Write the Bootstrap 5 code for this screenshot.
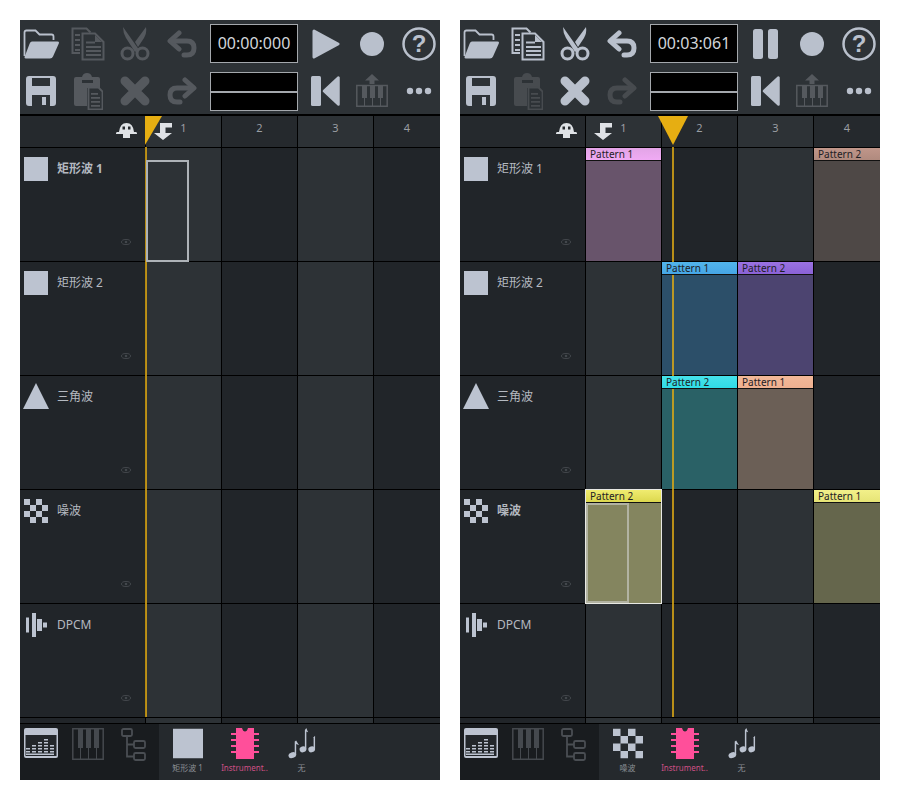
<!DOCTYPE html>
<html lang="zh">
<head>
<meta charset="utf-8">
<title>FamiStudio</title>
<link rel="stylesheet" href="https://cdn.jsdelivr.net/npm/bootstrap@5.3.0/dist/css/bootstrap.min.css">
<style>
body{background:#fff;font-family:"Noto Sans","Noto Sans CJK SC",sans-serif;margin:0}
.stage{padding:20px;gap:20px;width:900px}
.fs-panel{width:420px;height:760px;overflow:hidden;position:relative;background:#212529}
.tools{height:94px;background:#2d3236;display:grid;grid-template-columns:41px 54px 40px 54px 90px 53px 40px 48px;grid-template-rows:47px 47px;justify-items:center;align-items:center}
.tools svg{display:block}
.tools .last{padding-left:6px;justify-self:stretch;display:flex;justify-content:center}
.on{color:#b9c0cc}.off{color:#55595e}.off2{color:#474b4f}
.timer{width:88px;height:39px;background:#000;border:1px solid #a4a8ad;color:#d2d5da;font-size:16px;line-height:36px;text-align:center}
.timer2{width:88px;height:39px;background:linear-gradient(#000 0 18px,#a4a8ad 18px 20px,#000 20px);border:1px solid #a4a8ad;margin-top:2px}
.trk,.hdr{display:grid;grid-template-columns:126px 76px 76px 76px 66px}
.hdr{border-top:2px solid #000;height:34px;border-bottom:1px solid #000}
.hdr>div{border-right:1px solid #000;color:#9a9ea3;font-size:11px;text-align:center;line-height:23px;position:relative}
.hdr svg{position:absolute}
.trk{height:114px;border-bottom:1px solid #000}
.trk.stub{height:6px}
.trk>div{border-right:1px solid #000;min-width:0}
.trk>div:last-child,.hdr>div:last-child{border-right:0}
.lt{background:#2d3236}.dk{background:#212529}
.hdr .dk{background:#25292d}.hdr .lt{background:#2d3236}
.lab0{background:#212529;padding:9px 0 0 0}
.lab0 svg{display:block;flex:none}
.tri-ic{margin:-2px -1px 0 3px}
.lname{color:#b4b9c0;font-size:12px;line-height:22px;margin:1px 0 0 9px;white-space:nowrap}
.lname.sel{font-weight:700}
.eye{margin:auto 0 16px 101px;color:#43474c}
.pat{display:flex;flex-direction:column;height:100%}
.phead{height:13px;border-bottom:1px solid #111;font-size:10px;line-height:12px;color:#1d2024;padding-left:4px;position:relative;z-index:2;white-space:nowrap}
.pbody{flex:1;position:relative}
.p-pink .phead{background:linear-gradient(#e2a4e6,#f0aaf4)}.p-pink .pbody{background:#68546b}
.p-brown .phead{background:linear-gradient(#c0968a,#b08a7e)}.p-brown .pbody{background:#4e4846}
.p-blue .phead{background:linear-gradient(#52b4ea,#46a6e6)}.p-blue .pbody{background:#2c4f69}
.p-purple .phead{background:linear-gradient(#9a72e2,#8a62d6)}.p-purple .pbody{background:#4c4470}
.p-cyan .phead{background:linear-gradient(#46e2ea,#30dce6)}.p-cyan .pbody{background:#2a6166}
.p-peach .phead{background:linear-gradient(#f2b898,#eeb090)}.p-peach .pbody{background:#6b5f56}
.p-yel .phead{background:linear-gradient(#f0ec70,#dcd84e)}.p-yel .pbody{background:#84855f}
.p-yel2 .phead{background:linear-gradient(#f2f08a,#e6e476)}.p-yel2 .pbody{background:#65664c}
.pat.picked{outline:2px solid #e8e9e4;outline-offset:-1px;position:relative;z-index:3}
.inner{border:2px solid #b2b3a2;width:43px;height:100%}
.ghost{position:absolute;left:0;top:12px;width:43px;height:102px;border:2px solid #aeb3b8;z-index:2}
.cell-rel{position:relative}
.phline{position:absolute;top:127px;width:2px;height:570px;background:rgba(224,170,20,.8);z-index:1}
.phtri{position:absolute;top:96px;z-index:4}
.foot{height:56px;display:flex;background:#25292d}
.fleft{width:139px;background:#191c1f;display:flex;flex:none;align-items:flex-start;padding-top:4px}
.fleft>div{display:flex;justify-content:center}
.fi{width:57px;text-align:center;color:#8a8e94;font-size:8px;line-height:12px;padding-top:4px;white-space:nowrap}
.fi svg{display:block;margin:0 auto 3px;height:31px}
.fi.pink{color:#cf4f86}
</style>
</head>
<body>
<svg width="0" height="0" class="d-block position-absolute">
<defs>
<symbol id="i-open" viewBox="0 0 36 30"><path d="M1.500 27V3.500q0-2 2-2h9l4 4h12q2 0 2 2V11" fill="none" stroke="currentColor" stroke-width="1.800"/><path d="M9 12.500h25.500q2 0 1.300 2L30 27.500q-.8 2-3 2H3q-2 0-1.300-2l5-13q.8-2 2.300-2z" fill="currentColor"/></symbol>
<symbol id="i-copy" viewBox="0 0 34 34"><g fill="none" stroke="currentColor" stroke-width="2"><path d="M9 26H1.500V1.500h14l4 4"/><path d="M11.500 6.500H24l8.500 8.500V32.500h-21z"/></g><path d="M15 14.500h9v2h-9zM15 19h15v2H15zM15 23h15v2H15zM15 27h15v2H15zM4 7h5v2H4zM4 12h5v2H4zM4 17h5v2H4zM4 22h5v2H4zM24 8l7 7h-7z" fill="currentColor"/></symbol>
<symbol id="i-cut" viewBox="0 0 30 34"><path d="M3 0l15.500 22-3.500 3L6 11Q3 6 3 0zM26 0q1 6-2 11l-6 9-3-5z" fill="currentColor"/><g fill="none" stroke="currentColor" stroke-width="3"><circle cx="7.500" cy="26.500" r="5.500"/><circle cx="22.500" cy="26.500" r="5.500"/></g></symbol>
<symbol id="i-undo" viewBox="0 0 30 28"><g fill="none" stroke="currentColor" stroke-width="5" stroke-linejoin="round" stroke-linecap="round"><path d="M12 3L3 11l9 8"/><path d="M5 11h15q7 0 7 7t-7 7h-3"/></g></symbol>
<symbol id="i-redo" viewBox="0 0 30 28"><g fill="none" stroke="currentColor" stroke-width="5" stroke-linejoin="round" stroke-linecap="round"><path d="M18 3l9 8-9 8"/><path d="M25 11H10q-7 0-7 7t7 7h3"/></g></symbol>
<symbol id="i-save" viewBox="0 0 30 30"><path fill-rule="evenodd" fill="currentColor" d="M3 0h24q3 0 3 3v24q0 3-3 3H3q-3 0-3-3V3q0-3 3-3zM6 2v8h18V2zM6 19v11h18V19z"/><path d="M16 21h4v8h-4z" fill="currentColor"/></symbol>
<symbol id="i-paste" viewBox="0 0 30 38"><path fill="currentColor" d="M3 5h6q1-4 5-4t5 4h6q2 0 2 2v9H14v18H3q-2 0-2-2V7q0-2 2-2zM9 8v3h11V8z" fill-rule="evenodd"/><path d="M15.500 15.500h10l4 4v18h-14z" fill="none" stroke="currentColor" stroke-width="1.800"/><path d="M18 21h7v1.800h-7zM18 25h9v1.800h-9zM18 29h9v1.800h-9zM18 33h9v1.800h-9z" fill="currentColor"/></symbol>
<symbol id="i-x" viewBox="0 0 30 30"><path d="M5 5l20 20M25 5L5 25" stroke="currentColor" stroke-width="9" stroke-linecap="round"/></symbol>
<symbol id="i-play" viewBox="0 0 28 30"><path d="M2 2l24 13L2 28z" fill="currentColor" stroke="currentColor" stroke-width="3" stroke-linejoin="round"/></symbol>
<symbol id="i-pause" viewBox="0 0 26 30"><rect x="0" y="0" width="10" height="30" rx="2.500" fill="currentColor"/><rect x="15" y="0" width="10" height="30" rx="2.500" fill="currentColor"/></symbol>
<symbol id="i-skip" viewBox="0 0 30 30"><rect x="0" y="0" width="10" height="30" rx="1.500" fill="currentColor"/><path d="M27.500 1.500v27L13 15z" fill="currentColor" stroke="currentColor" stroke-width="2.500" stroke-linejoin="round"/></symbol>
<symbol id="i-upkeys" viewBox="0 0 32 33"><path d="M16 0l7 6.500h-4.500V10h-5V6.500H9z" fill="currentColor"/><path d="M.8 11.500h30.400v20.700H.8z" fill="none" stroke="currentColor" stroke-width="1.500"/><path d="M6 12h5v12H6zM14 12h5v12h-5zM22 12h5v12h-5zM8 24h1v8H8zM16 24h1v8h-1zM24 24h1v8h-1z" fill="currentColor"/></symbol>
<symbol id="i-eye" viewBox="0 0 10 6"><ellipse cx="5" cy="3" rx="4.500" ry="2.500" fill="none" stroke="currentColor"/><circle cx="5" cy="3" r="1.300" fill="currentColor"/></symbol>
<symbol id="i-sq" viewBox="0 0 24 24"><rect width="24" height="24" fill="#bcc3d0"/></symbol>
<symbol id="i-tri" viewBox="0 0 26 26"><path d="M13 0l13 26H0z" fill="#bcc3d0"/></symbol>
<symbol id="i-noise" viewBox="0 0 24 24"><path d="M0 0h6v6H0zM12 0h6v6h-6zM6 6h6v6H6zM18 6h6v6h-6zM0 12h6v6H0zM12 12h6v6h-6zM6 18h6v6H6zM18 18h6v6h-6z" fill="#bcc3d0"/></symbol>
<symbol id="i-dpcm" viewBox="0 0 24 24"><path d="M2 4.500h3v15H2zM8 0h4v24H8zM13 6h5v12h-5zM19 9.500h4v5h-4z" fill="#bcc3d0"/></symbol>
<symbol id="i-seq" viewBox="0 0 34 30"><rect width="34" height="30" rx="2" fill="#bcc3d0"/><rect x="1.500" y="7" width="31" height="21" fill="#22262a"/><path d="M2 20h4v1.500H2zM2 23h4v1.500H2zM8 17h4v1.500H8zM8 20h4v1.500H8zM8 23h4v1.500H8zM14 14h4v1.500h-4zM14 17h4v1.500h-4zM14 20h4v1.500h-4zM14 23h4v1.500h-4zM20 11h4v1.500h-4zM20 14h4v1.500h-4zM20 17h4v1.500h-4zM20 20h4v1.500h-4zM20 23h4v1.500h-4zM26 17h4v1.500h-4zM26 20h4v1.500h-4zM26 23h4v1.500h-4zM2 25.500h28v1.500H2z" fill="#bcc3d0"/></symbol>
<symbol id="i-keys" viewBox="0 0 32 32"><path d="M.8.800h30.400v30.400H.8z" fill="none" stroke="#45494e" stroke-width="1.500"/><path d="M6 1h5v19H6zM14 1h5v19h-5zM22 1h5v19h-5z" fill="#45494e"/><path d="M8 20h1v11H8zM16 20h1v11h-1zM24 20h1v11h-1z" fill="#45494e"/></symbol>
<symbol id="i-tree" viewBox="0 0 25 33"><g fill="none" stroke="#4a4e53" stroke-width="1.800"><rect x="1" y="1" width="10" height="7" rx="1.500"/><rect x="13" y="13" width="11" height="7" rx="1.500"/><rect x="13" y="25" width="11" height="7" rx="1.500"/><path d="M6 8v20.500h7M6 16.500h7"/></g></symbol>
<symbol id="i-chip" viewBox="0 0 30 31"><path d="M6 0h6q1 3.500 3 3.500T18 0h6v31H6z" fill="#ff4f9a"/><path d="M1 5h28v2H1zM1 11h28v2H1zM1 17h28v2H1zM1 23h28v2H1z" fill="#ff4f9a"/></symbol>
<symbol id="i-notes" viewBox="0 0 29 32"><g fill="#bcc3d0"><ellipse cx="5" cy="28" rx="4" ry="3" transform="rotate(-20 5 28)"/><path d="M7.500 14l1.500-1v15H7.500zM9 13q1.500 3 3 4.500-2-.5-3-1z"/><ellipse cx="16" cy="22" rx="3.500" ry="3" transform="rotate(-20 16 22)"/><path d="M18 2l1.500-2v22H18zM19.500 0q1 3 2 4.500-1-.5-2-1z"/><ellipse cx="25" cy="22" rx="3.500" ry="3" transform="rotate(-20 25 22)"/><path d="M27 9.500l1.500-1.500v14H27z"/></g></symbol>
<symbol id="i-snap" viewBox="0 0 21 15"><path fill-rule="evenodd" d="M10.500 0Q17 0 18 9h2q1 0 1 1.500v.5h-7v4H7v-4H0v-.5Q0 9 1 9h2Q4 0 10.500 0zM6.500 3.500v3h2.500v-3zM12 3.500v3h2.500v-3z" fill="#dfe2e6"/></symbol>
<symbol id="i-arrow" viewBox="0 0 18 17"><path d="M6 0h12v4.500h-6.500V10H18L9 17 0 10h6z" fill="#dfe2e6"/></symbol>
</defs>
</svg>

<div class="stage d-flex">
<!-- left -->
<div class="fs-panel">
 <div class="tools">
  <svg class="on" width="36" height="30"><use href="#i-open"/></svg>
  <svg class="off" width="34" height="34"><use href="#i-copy"/></svg>
  <svg class="off" width="30" height="34"><use href="#i-cut"/></svg>
  <svg class="off" width="30" height="28"><use href="#i-undo"/></svg>
  <div class="timer">00:00:000</div>
  <svg class="on" width="28" height="30"><use href="#i-play"/></svg>
  <svg class="on" width="24" height="24"><circle cx="12" cy="12" r="12" fill="currentColor"/></svg>
  <div class="last"><svg class="on" width="34" height="34" viewBox="0 0 34 34"><circle cx="17" cy="17" r="15.500" fill="none" stroke="currentColor" stroke-width="2.500"/><text x="17" y="25" text-anchor="middle" font-family="Liberation Sans" font-weight="700" font-size="24" fill="currentColor">?</text></svg></div>
  <svg class="on" width="30" height="30"><use href="#i-save"/></svg>
  <svg class="off" width="30" height="38"><use href="#i-paste"/></svg>
  <svg class="off" width="30" height="30"><use href="#i-x"/></svg>
  <svg class="off" width="30" height="28"><use href="#i-redo"/></svg>
  <div class="timer2"></div>
  <svg class="on" width="30" height="30"><use href="#i-skip"/></svg>
  <svg class="off" width="32" height="33"><use href="#i-upkeys"/></svg>
  <div class="last"><svg class="on" width="26" height="8" viewBox="0 0 26 8"><circle cx="4" cy="4" r="3.200" fill="currentColor"/><circle cx="13" cy="4" r="3.200" fill="currentColor"/><circle cx="22" cy="4" r="3.200" fill="currentColor"/></svg></div>
 </div>
 <div class="hdr">
  <div class="dk"><svg width="21" height="15" style="left:96px;top:7px"><use href="#i-snap"/></svg></div>
  <div class="lt"><svg width="18" height="17" style="left:8px;top:7px"><use href="#i-arrow"/></svg>1</div>
  <div class="dk">2</div><div class="lt">3</div><div class="dk">4</div>
 </div>
 <div class="trk">
  <div class="lab0 d-flex flex-column"><div class="d-flex"><svg width="24" height="24" class="ms-1"><use href="#i-sq"/></svg><span class="lname sel">矩形波 1</span></div><svg class="eye" width="10" height="6"><use href="#i-eye"/></svg></div>
  <div class="lt cell-rel"><div class="ghost"></div></div><div class="dk"></div><div class="lt"></div><div class="dk"></div>
 </div>
 <div class="trk">
  <div class="lab0 d-flex flex-column"><div class="d-flex"><svg width="24" height="24" class="ms-1"><use href="#i-sq"/></svg><span class="lname">矩形波 2</span></div><svg class="eye" width="10" height="6"><use href="#i-eye"/></svg></div>
  <div class="lt"></div><div class="dk"></div><div class="lt"></div><div class="dk"></div>
 </div>
 <div class="trk">
  <div class="lab0 d-flex flex-column"><div class="d-flex"><svg width="26" height="26" class="tri-ic"><use href="#i-tri"/></svg><span class="lname">三角波</span></div><svg class="eye" width="10" height="6"><use href="#i-eye"/></svg></div>
  <div class="lt"></div><div class="dk"></div><div class="lt"></div><div class="dk"></div>
 </div>
 <div class="trk">
  <div class="lab0 d-flex flex-column"><div class="d-flex"><svg width="24" height="24" class="ms-1"><use href="#i-noise"/></svg><span class="lname">噪波</span></div><svg class="eye" width="10" height="6"><use href="#i-eye"/></svg></div>
  <div class="lt"></div><div class="dk"></div><div class="lt"></div><div class="dk"></div>
 </div>
 <div class="trk">
  <div class="lab0 d-flex flex-column"><div class="d-flex"><svg width="24" height="24" class="ms-1"><use href="#i-dpcm"/></svg><span class="lname">DPCM</span></div><svg class="eye" width="10" height="6"><use href="#i-eye"/></svg></div>
  <div class="lt"></div><div class="dk"></div><div class="lt"></div><div class="dk"></div>
 </div>
 <div class="trk stub"><div class="dk"></div><div class="lt"></div><div class="dk"></div><div class="lt"></div><div class="dk"></div></div>
 <div class="foot">
  <div class="fleft">
   <div style="width:41px"><svg width="34" height="30"><use href="#i-seq"/></svg></div>
   <div style="width:54px"><svg width="32" height="32"><use href="#i-keys"/></svg></div>
   <div style="width:36px"><svg width="25" height="33"><use href="#i-tree"/></svg></div>
  </div>
  <div class="fi"><svg width="30" height="31" viewBox="0 0 24 24"><use href="#i-sq"/></svg>矩形波 1</div>
  <div class="fi pink"><svg width="30" height="31"><use href="#i-chip"/></svg>Instrument..</div>
  <div class="fi"><svg width="29" height="31"><use href="#i-notes"/></svg>无</div>
 </div>
 <div class="phline" style="left:125px"></div>
 <svg class="phtri" width="17" height="30" style="left:125px"><path d="M0 0h17L0 29z" fill="#e6ae12"/></svg>
</div>

<!-- right -->
<div class="fs-panel">
 <div class="tools">
  <svg class="on" width="36" height="30"><use href="#i-open"/></svg>
  <svg class="on" width="34" height="34"><use href="#i-copy"/></svg>
  <svg class="on" width="30" height="34"><use href="#i-cut"/></svg>
  <svg class="on" width="30" height="28"><use href="#i-undo"/></svg>
  <div class="timer">00:03:061</div>
  <svg class="on" width="26" height="30"><use href="#i-pause"/></svg>
  <svg class="on" width="24" height="24"><circle cx="12" cy="12" r="12" fill="currentColor"/></svg>
  <div class="last"><svg class="on" width="34" height="34" viewBox="0 0 34 34"><circle cx="17" cy="17" r="15.500" fill="none" stroke="currentColor" stroke-width="2.500"/><text x="17" y="25" text-anchor="middle" font-family="Liberation Sans" font-weight="700" font-size="24" fill="currentColor">?</text></svg></div>
  <svg class="on" width="30" height="30"><use href="#i-save"/></svg>
  <svg class="off2" width="30" height="38"><use href="#i-paste"/></svg>
  <svg class="on" width="30" height="30"><use href="#i-x"/></svg>
  <svg class="off2" width="30" height="28"><use href="#i-redo"/></svg>
  <div class="timer2"></div>
  <svg class="on" width="30" height="30"><use href="#i-skip"/></svg>
  <svg class="off" width="32" height="33"><use href="#i-upkeys"/></svg>
  <div class="last"><svg class="on" width="26" height="8" viewBox="0 0 26 8"><circle cx="4" cy="4" r="3.200" fill="currentColor"/><circle cx="13" cy="4" r="3.200" fill="currentColor"/><circle cx="22" cy="4" r="3.200" fill="currentColor"/></svg></div>
 </div>
 <div class="hdr">
  <div class="dk"><svg width="21" height="15" style="left:96px;top:7px"><use href="#i-snap"/></svg></div>
  <div class="lt"><svg width="18" height="17" style="left:8px;top:7px"><use href="#i-arrow"/></svg>1</div>
  <div class="dk">2</div><div class="lt">3</div><div class="dk">4</div>
 </div>
 <div class="trk">
  <div class="lab0 d-flex flex-column"><div class="d-flex"><svg width="24" height="24" class="ms-1"><use href="#i-sq"/></svg><span class="lname">矩形波 1</span></div><svg class="eye" width="10" height="6"><use href="#i-eye"/></svg></div>
  <div class="lt"><div class="pat p-pink"><div class="phead">Pattern 1</div><div class="pbody"></div></div></div><div class="dk"></div><div class="lt"></div><div class="dk"><div class="pat p-brown"><div class="phead">Pattern 2</div><div class="pbody"></div></div></div>
 </div>
 <div class="trk">
  <div class="lab0 d-flex flex-column"><div class="d-flex"><svg width="24" height="24" class="ms-1"><use href="#i-sq"/></svg><span class="lname">矩形波 2</span></div><svg class="eye" width="10" height="6"><use href="#i-eye"/></svg></div>
  <div class="lt"></div><div class="dk"><div class="pat p-blue"><div class="phead">Pattern 1</div><div class="pbody"></div></div></div><div class="lt"><div class="pat p-purple"><div class="phead">Pattern 2</div><div class="pbody"></div></div></div><div class="dk"></div>
 </div>
 <div class="trk">
  <div class="lab0 d-flex flex-column"><div class="d-flex"><svg width="26" height="26" class="tri-ic"><use href="#i-tri"/></svg><span class="lname">三角波</span></div><svg class="eye" width="10" height="6"><use href="#i-eye"/></svg></div>
  <div class="lt"></div><div class="dk"><div class="pat p-cyan"><div class="phead">Pattern 2</div><div class="pbody"></div></div></div><div class="lt"><div class="pat p-peach"><div class="phead">Pattern 1</div><div class="pbody"></div></div></div><div class="dk"></div>
 </div>
 <div class="trk">
  <div class="lab0 d-flex flex-column"><div class="d-flex"><svg width="24" height="24" class="ms-1"><use href="#i-noise"/></svg><span class="lname sel">噪波</span></div><svg class="eye" width="10" height="6"><use href="#i-eye"/></svg></div>
  <div class="lt"><div class="pat p-yel picked"><div class="phead">Pattern 2</div><div class="pbody"><div class="inner"></div></div></div></div><div class="dk"></div><div class="lt"></div><div class="dk"><div class="pat p-yel2"><div class="phead">Pattern 1</div><div class="pbody"></div></div></div>
 </div>
 <div class="trk">
  <div class="lab0 d-flex flex-column"><div class="d-flex"><svg width="24" height="24" class="ms-1"><use href="#i-dpcm"/></svg><span class="lname">DPCM</span></div><svg class="eye" width="10" height="6"><use href="#i-eye"/></svg></div>
  <div class="lt"></div><div class="dk"></div><div class="lt"></div><div class="dk"></div>
 </div>
 <div class="trk stub"><div class="dk"></div><div class="lt"></div><div class="dk"></div><div class="lt"></div><div class="dk"></div></div>
 <div class="foot">
  <div class="fleft">
   <div style="width:41px"><svg width="34" height="30"><use href="#i-seq"/></svg></div>
   <div style="width:54px"><svg width="32" height="32"><use href="#i-keys"/></svg></div>
   <div style="width:36px"><svg width="25" height="33"><use href="#i-tree"/></svg></div>
  </div>
  <div class="fi"><svg width="30" height="31" viewBox="0 0 24 24"><use href="#i-noise"/></svg>噪波</div>
  <div class="fi pink"><svg width="30" height="31"><use href="#i-chip"/></svg>Instrument..</div>
  <div class="fi"><svg width="29" height="31"><use href="#i-notes"/></svg>无</div>
 </div>
 <div class="phline" style="left:212px"></div>
 <svg class="phtri" width="30" height="30" style="left:198px"><path d="M0 0h30L15 29z" fill="#e6ae12"/></svg>
</div>
</div>
<script src="https://cdn.jsdelivr.net/npm/bootstrap@5.3.0/dist/js/bootstrap.bundle.min.js"></script>
</body>
</html>
